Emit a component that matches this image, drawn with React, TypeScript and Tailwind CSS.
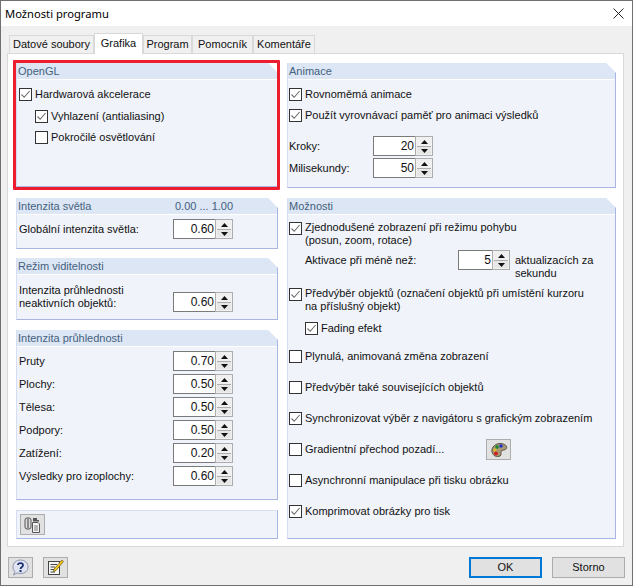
import React from "react";

function Check({ on }: { on?: boolean }) {
  return (
    <span className="w-[13px] h-[13px] shrink-0 border border-[#333333] bg-white flex items-center justify-center">
      {on && (
        <svg width="11" height="11" viewBox="0 0 11 11" fill="none">
          <path d="M1.5 5.5 L4.2 8.3 L9.6 2" stroke="#6a6a6a" strokeWidth="1.1" />
        </svg>
      )}
    </span>
  );
}

function Opt({ on, children, cls = "" }: { on?: boolean; children: React.ReactNode; cls?: string }) {
  return (
    <div className={"flex items-center gap-[3px] " + cls}>
      <Check on={on} />
      <span>{children}</span>
    </div>
  );
}

function Spin({ v, w = "w-[60px]" }: { v: string; w?: string }) {
  return (
    <div className={"flex h-5 shrink-0 " + w}>
      <div className="flex-1 bg-white border border-r-0 border-[#7a7a7a] text-right pr-[1px] leading-[18px] text-[12px]">{v}</div>
      <div className="w-[18px] border border-[#adadad] flex flex-col bg-[#f0f0f0] p-px gap-px">
        <div className="flex-1 flex items-center justify-center">
          <svg width="7" height="4" viewBox="0 0 7 4"><path d="M3.5 0 L7 4 L0 4 Z" fill="#111" /></svg>
        </div>
        <div className="flex-1 flex items-center justify-center border-t border-[#adadad] bg-[#e6e6e6]">
          <svg width="7" height="4" viewBox="0 0 7 4"><path d="M0 0 L7 0 L3.5 4 Z" fill="#111" /></svg>
        </div>
      </div>
    </div>
  );
}

function Panel({ title, right, cls, children }: { title?: string; right?: string; cls: string; children: React.ReactNode }) {
  return (
    <div className={"flex flex-col bg-[#f0f3fa] border-r border-b border-l border-r-[#a9b5e2] border-b-[#a9b5e2] border-l-[#d5def2] [clip-path:polygon(0_0,calc(100%-10px)_0,100%_10px,100%_100%,0_100%)] " + cls}>
      {title && (
        <div className="h-[17px] shrink-0 bg-[#dce6f4] border-b border-white pl-[1px] flex items-center text-[#44617f] leading-none">
          <span className="w-[157px]">{title}</span>
          {right && <span>{right}</span>}
        </div>
      )}
      {children}
    </div>
  );
}

function SpinRow({ label, v }: { label: string; v: string }) {
  return (
    <div className="h-5 flex items-center justify-between pl-[2px] pr-[44px]">
      <span>{label}</span>
      <Spin v={v} />
    </div>
  );
}

function IconBtn({ children, cls = "" }: { children: React.ReactNode; cls?: string }) {
  return (
    <div className={"w-[25px] h-[21px] bg-[#e1e1e1] border border-[#adadad] flex items-center justify-center " + cls}>{children}</div>
  );
}

function Tab({ label, active, cls }: { label: string; active?: boolean; cls: string }) {
  return (
    <div
      className={
        "flex items-center justify-center border border-b-0 border-[#d9d9d9] " +
        (active ? "bg-white h-[21px] -mb-px relative z-10 pb-[2px]" : "bg-[#f0f0f0] h-[18px]") +
        " " + cls
      }
    >
      {label}
    </div>
  );
}

export default function App() {
  return (
    <div className="w-[633px] h-[586px] bg-[#f0f0f0] border border-[#707070] flex flex-col overflow-hidden text-[11px] leading-[13px] text-[#111] font-['Liberation_Sans',Arial,sans-serif]">
      <div className="h-[25px] shrink-0 bg-white flex items-center justify-between pl-1 pr-[5px]">
        <span className="text-[11.2px] font-['Noto_Sans',sans-serif] text-black">Možnosti programu</span>
        <svg width="11" height="11" viewBox="0 0 11 11" fill="none" className="mr-[3px]">
          <path d="M0.5 0.5 L10.5 10.5 M10.5 0.5 L0.5 10.5" stroke="#222" strokeWidth="1" />
        </svg>
      </div>

      <div className="flex items-end h-[27px] shrink-0 pl-[8px]">
        <Tab label="Datové soubory" cls="w-[85px]" />
        <Tab label="Grafika" active cls="w-[49px]" />
        <Tab label="Program" cls="w-[49px]" />
        <Tab label="Pomocník" cls="w-[61px]" />
        <Tab label="Komentáře" cls="w-[62px]" />
      </div>

      <div className="relative ml-[6px] w-[617px] h-[494px] bg-white border border-[#d9d9d9] pt-[9px] pl-[8px] flex gap-[9px]">
        <div className="w-[262px] flex flex-col">
          <Panel title="OpenGL" cls="h-[124px] mb-[11px]">
            <div className="pl-[2px] pt-[7px]">
              <Opt on cls="h-[14px]">Hardwarová akcelerace</Opt>
              <Opt on cls="h-[14px] ml-4 mt-[8px]">Vyhlazení (antialiasing)</Opt>
              <Opt cls="h-[14px] ml-4 mt-[7px]">Pokročilé osvětlování</Opt>
            </div>
          </Panel>
          <Panel title="Intenzita světla" right="0.00 ... 1.00" cls="h-[51px] mb-[9px]">
            <div className="pt-[4px]"><SpinRow label="Globální intenzita světla:" v="0.60" /></div>
          </Panel>
          <Panel title="Režim viditelnosti" cls="h-[62px] mb-[10px]">
            <div className="flex justify-between pl-[2px] pr-[44px] pt-[8px]">
              <span className="pt-px">Intenzita průhlednosti<br />neaktivních objektů:</span>
              <div className="pt-[9px]"><Spin v="0.60" /></div>
            </div>
          </Panel>
          <Panel title="Intenzita průhlednosti" cls="h-[170px] mb-[10px]">
            <div className="flex flex-col gap-[3px] pt-[4px]">
              <SpinRow label="Pruty" v="0.70" />
              <SpinRow label="Plochy:" v="0.50" />
              <SpinRow label="Tělesa:" v="0.50" />
              <SpinRow label="Podpory:" v="0.50" />
              <SpinRow label="Zatížení:" v="0.20" />
              <SpinRow label="Výsledky pro izoplochy:" v="0.60" />
            </div>
          </Panel>
          <div className="h-[29px] bg-[#f0f3fa] border border-t-[#d5def2] border-l-[#d5def2] border-r-[#a9b5e2] border-b-[#a9b5e2] pl-[3px] pt-[3px]">
            <IconBtn>
              <svg width="17" height="16" viewBox="0 0 17 16" fill="none">
                <rect x="1" y="1" width="6" height="11" rx="2" fill="#dcdcdc" stroke="#555" />
                <rect x="3" y="1.5" width="2" height="10" fill="#8a8a8a" />
                <path d="M8.5 5.5 H14 L15.5 7 V15.5 H8.5 Z" fill="#f4f4f4" stroke="#555" />
                <path d="M10 9 H14 M10 11 H14 M10 13 H14" stroke="#777" />
                <path d="M9 1 H13 V3 H15 V4.5 H9 Z" fill="#555" />
              </svg>
            </IconBtn>
          </div>
        </div>

        <div className="w-[329px] flex flex-col">
          <Panel title="Animace" cls="h-[125px] mb-[10px]">
            <div className="pl-[1px] pt-[7px]">
              <Opt on cls="h-[14px]">Rovnoměmá animace</Opt>
              <Opt on cls="h-[14px] mt-[7px]">Použít vyrovnávací paměť pro animaci výsledků</Opt>
              <div className="flex items-center justify-between w-[144px] h-5 mt-[14px]"><span>Kroky:</span><Spin v="20" /></div>
              <div className="flex items-center justify-between w-[144px] h-5 mt-[2px]"><span>Milisekundy:</span><Spin v="50" /></div>
            </div>
          </Panel>
          <Panel title="Možnosti" cls="h-[341px]">
            <div className="pl-[1px] pt-[7px]">
              <div className="flex gap-[3px]">
                <Check on />
                <span className="-mt-px">Zjednodušené zobrazení při režimu pohybu<br />(posun, zoom, rotace)</span>
              </div>
              <div className="flex mt-[3px] pl-[16px]">
                <span className="w-[153px] pt-[4px]">Aktivace při méně než:</span>
                <Spin v="5" w="w-[52px]" />
                <span className="pl-[5px] pt-[4px]">aktualizacích za<br />sekundu</span>
              </div>
              <div className="flex gap-[3px] mt-[8px]">
                <Check on />
                <span className="-mt-px">Předvýběr objektů (označení objektů při umístění kurzoru<br />na příslušný objekt)</span>
              </div>
              <Opt on cls="h-[14px] ml-4 mt-[8px]">Fading efekt</Opt>
              <div className="flex flex-col mt-[6px]">
                <Opt cls="h-[31px]">Plynulá, animovaná změna zobrazení</Opt>
                <Opt cls="h-[31px]">Předvýběr také souvisejících objektů</Opt>
                <Opt on cls="h-[31px]">Synchronizovat výběr z navigátoru s grafickým zobrazením</Opt>
                <div className="h-[31px] flex items-center">
                  <Opt cls="w-[197px]">Gradientní přechod pozadí...</Opt>
                  <IconBtn>
                    <svg width="18" height="16" viewBox="0 0 18 16" fill="none">
                      <path d="M2 10 C1 5 6 1 11 1.5 C15 2 17.5 4 16.5 6.5 C15.5 8.5 12 7.5 11 9.5 C10.5 11 12 12.5 10 14 C7 15.5 3 14 2 10 Z" fill="#a89878" stroke="#5a5040" />
                      <circle cx="7" cy="5" r="1.8" fill="#1c8a2c" />
                      <circle cx="11" cy="4" r="1.8" fill="#2233cc" />
                      <circle cx="5" cy="8" r="1.6" fill="#e0c020" />
                      <circle cx="6" cy="11.5" r="2" fill="#d02020" />
                    </svg>
                  </IconBtn>
                </div>
                <Opt cls="h-[31px]">Asynchronní manipulace při tisku obrázku</Opt>
                <Opt on cls="h-[31px]">Komprimovat obrázky pro tisk</Opt>
              </div>
            </div>
          </Panel>
        </div>

        <div className="absolute left-[5px] top-[6px] w-[267px] h-[130px] border-[3px] border-[#ed1c2e] rounded-[1px]" />
      </div>

      <div className="flex items-center h-[21px] mt-[10px] pl-[7px] pr-[7px]">
        <IconBtn>
          <svg width="17" height="17" viewBox="0 0 17 17" fill="none">
            <path d="M8.5 1 C13 1 16 4 16 8 C16 12 13 14.5 8.5 14.5 C7 14.5 6 14.2 5 14 L1.5 16 L3 12.5 C1.5 11.5 1 10 1 8 C1 4 4 1 8.5 1 Z" fill="#dfe3f2" stroke="#8d93ad" />
            <path d="M6 6 C6 3.5 11 3.5 11 6.3 C11 8 8.7 8 8.5 10" stroke="#1d2f70" strokeWidth="1.8" fill="none" />
            <rect x="7.5" y="11" width="2" height="2" fill="#1d2f70" />
          </svg>
        </IconBtn>
        <IconBtn cls="ml-[10px]">
          <svg width="17" height="17" viewBox="0 0 17 17" fill="none">
            <rect x="1.5" y="2.5" width="11" height="13" fill="#f7f7f7" stroke="#444" />
            <path d="M3.5 5.5 H10 M3.5 8 H8 M3.5 10.5 H7 M3.5 13 H8" stroke="#444" />
            <path d="M15 1 L16.5 2.5 L9 11.5 L6.5 12.5 L7 10 Z" fill="#f4c81e" stroke="#6b5510" strokeWidth="0.7" />
          </svg>
        </IconBtn>
        <div className="flex-1" />
        <div className="w-[73px] h-[21px] bg-[#e1e1e1] border-2 border-[#0078d7] flex items-center justify-center">OK</div>
        <div className="w-[73px] h-[21px] ml-[10px] bg-[#e1e1e1] border border-[#adadad] flex items-center justify-center">Storno</div>
      </div>
    </div>
  );
}
